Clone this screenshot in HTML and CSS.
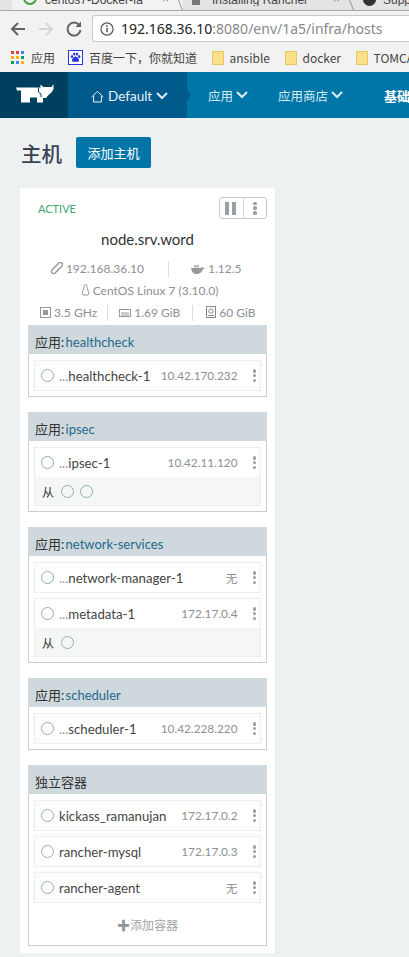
FILE: index.html
```html
<!DOCTYPE html>
<html lang="en">
<head>
    <meta charset="UTF-8">
    <title>Rancher - Hosts</title>
    <link rel="stylesheet" href="styles.css">
</head>
<body>

<div class="tabstrip">
    <div class="tab tab-first">
        <span class="tab-dot"></span>
        <span class="tab-title">centos7-Docker-fa</span>
        <span class="tab-close">×</span>
    </div>
    <div class="tab">
        <span class="tab-page"></span>
        <span class="tab-title">Installing Rancher</span>
        <span class="tab-close">×</span>
    </div>
    <div class="tab tab-last">
        <span class="tab-github"></span>
        <span class="tab-title">Support</span>
    </div>
</div>

<div class="toolbar">
    <svg class="tool" width="18" height="18" viewBox="0 0 18 18"><path d="M16 9H3M9 3L3 9l6 6" fill="none" stroke="#5f6368" stroke-width="2"/></svg>
    <svg class="tool" width="18" height="18" viewBox="0 0 18 18"><path d="M2 9h13M9 3l6 6-6 6" fill="none" stroke="#d5d5d5" stroke-width="2"/></svg>
    <svg class="tool" width="18" height="18" viewBox="0 0 18 18"><path d="M14.5 5.500A6.500 6.500 0 1 0 15.500 10" fill="none" stroke="#5f6368" stroke-width="2"/><path d="M16 1.500V7h-5.500z" fill="#5f6368"/></svg>
    <div class="omnibox">
        <svg width="14" height="14" viewBox="0 0 15 15"><circle cx="7.500" cy="7.500" r="6.500" fill="none" stroke="#555" stroke-width="1.300"/><path d="M7.500 6.500v4.500M7.500 3.500v1.800" stroke="#555" stroke-width="1.600"/></svg>
        <span class="url"><b>192.168.36.10</b>:8080/env/1a5/infra/hosts</span>
    </div>
</div>

<div class="bookmarks">
    <div class="bookmark">
        <svg width="14" height="14" viewBox="0 0 14 14">
            <g fill="#db4437"><rect x="0" y="0" width="3" height="3"/><rect x="5" y="0" width="3" height="3"/></g>
            <rect x="10" y="0" width="3" height="3" fill="#4285f4"/>
            <g fill="#f4b400"><rect x="0" y="5" width="3" height="3"/><rect x="5" y="5" width="3" height="3"/></g>
            <rect x="10" y="5" width="3" height="3" fill="#0f9d58"/>
            <g fill="#0f9d58"><rect x="0" y="10" width="3" height="3"/></g>
            <rect x="5" y="10" width="3" height="3" fill="#4285f4"/>
            <rect x="10" y="10" width="3" height="3" fill="#f4b400"/>
        </svg>
        <span>应用</span>
    </div>
    <div class="bookmark">
        <svg width="15" height="15" viewBox="0 0 15 15">
            <rect x="0.500" y="0.500" width="14" height="14" fill="#fff" stroke="#2932e1"/>
            <g fill="#2932e1"><ellipse cx="4" cy="6.500" rx="1.200" ry="1.600"/><ellipse cx="6.200" cy="4" rx="1.200" ry="1.600"/><ellipse cx="9" cy="4" rx="1.200" ry="1.600"/><ellipse cx="11.200" cy="6.500" rx="1.200" ry="1.600"/><path d="M7.500 6.500c-2 0-3.500 2.500-3.500 4 0 1.500 1.500 1.500 3.500 1.200 2 .3 3.500.3 3.500-1.200 0-1.500-1.500-4-3.500-4z"/></g>
        </svg>
        <span>百度一下，你就知道</span>
    </div>
    <div class="bookmark bookmark-dir"><span class="folder"></span><span>ansible</span></div>
    <div class="bookmark bookmark-dir"><span class="folder"></span><span>docker</span></div>
    <div class="bookmark bookmark-dir"><span class="folder"></span><span>TOMCAT</span></div>
</div>

<nav class="topnav">
    <div class="nav-logo">
        <svg width="38" height="19" viewBox="0 0 38 19"><path d="M0 3.500L1 6.500H5V18.500H14V13.500H21V18.500H27V14H30L33 10.500 35.500 8.500 37.500 5 37.500 0 35.500 3H27.500L24.500 .5V3.500z" fill="#fff"/><path d="M22.500 3.500V8L25 10V13" fill="none" stroke="#00405f"/></svg>
    </div>
    <div class="nav-env">
        <svg width="13" height="13" viewBox="0 0 14 13"><path d="M.8 7L7 1l6.200 6M2.800 6v6.400h8.400V6" fill="none" stroke="#fff" stroke-width="1"/></svg>
        <span>Default</span>
        <svg class="chev" width="12" height="8" viewBox="0 0 12 8"><path d="M1 1l5 5 5-5" fill="none" stroke="#d9edf5" stroke-width="2"/></svg>
    </div>
    <div class="nav-item">应用<svg class="chev" width="12" height="8" viewBox="0 0 12 8"><path d="M1 1l5 5 5-5" fill="none" stroke="#d9edf5" stroke-width="2"/></svg></div>
    <div class="nav-item">应用商店<svg class="chev" width="12" height="8" viewBox="0 0 12 8"><path d="M1 1l5 5 5-5" fill="none" stroke="#d9edf5" stroke-width="2"/></svg></div>
    <div class="nav-item nav-active">基础架构</div>
</nav>

<main class="page">
    <div class="page-head">
        <h1>主机</h1>
        <button class="add-btn">添加主机</button>
    </div>

    <div class="host-card">
        <div class="host-top">
            <span class="state">ACTIVE</span>
            <div class="host-actions">
                <span class="act"><i class="pause"></i><i class="pause"></i></span>
                <span class="act"><span class="dots"><i></i><i></i><i></i></span></span>
            </div>
        </div>
        <div class="host-name">node.srv.word</div>
        <div class="info-row info-two">
            <span>
                <svg width="12" height="12" viewBox="0 0 11 11"><rect x="3.500" y="-1" width="4" height="13" rx="2" transform="rotate(45 5.500 5.500)" fill="none" stroke="#999" stroke-width="1.400"/></svg>
                192.168.36.10
            </span>
            <span>
                <svg width="14" height="9" viewBox="0 0 14 9"><path d="M0 3h10l1-1 3 1.500-2 .7C11 7 9 9 5 9 2 9 .5 6 0 3z" fill="#999"/><path d="M3 0h5v2.500H3z" fill="#bbb"/></svg>
                1.12.5
            </span>
        </div>
        <div class="info-row info-os">
            <span>
                <svg width="9" height="12" viewBox="0 0 9 12"><path d="M4.500.5C3 .5 3 2 3 4L1 9l1 2h5l1-2-2-5c0-2 0-3.500-1.500-3.500z" fill="none" stroke="#999"/></svg>
                CentOS Linux 7 (3.10.0)
            </span>
        </div>
        <div class="info-row info-three">
            <span>
                <svg width="11" height="11" viewBox="0 0 11 11"><rect x=".5" y=".5" width="10" height="10" fill="none" stroke="#999"/><rect x="3" y="3" width="5" height="5" fill="#999"/></svg>
                3.5 GHz
            </span>
            <span>
                <svg width="12" height="10" viewBox="0 0 12 10"><rect x=".5" y="1.500" width="11" height="7" fill="none" stroke="#999"/><path d="M3 4v4M5 4v4M7 4v4M9 4v4" stroke="#999"/></svg>
                1.69 GiB
            </span>
            <span>
                <svg width="10" height="12" viewBox="0 0 10 12"><rect x=".5" y=".5" width="9" height="11" fill="none" stroke="#888"/><circle cx="5" cy="5" r="2.200" fill="none" stroke="#888"/><path d="M2 9.500h6" stroke="#888"/></svg>
                60 GiB
            </span>
        </div>

        <section class="stack">
            <div class="stack-head">应用: <a>healthcheck</a></div>
            <div class="stack-body">
                <div class="ctr">
                    <div class="ctr-main">
                        <span class="ring"></span>
                        <span class="ctr-name"><em>...</em>healthcheck-1</span>
                        <span class="ctr-ip">10.42.170.232</span>
                        <span class="dots"><i></i><i></i><i></i></span>
                    </div>
                </div>
            </div>
        </section>

        <section class="stack">
            <div class="stack-head">应用: <a>ipsec</a></div>
            <div class="stack-body">
                <div class="ctr">
                    <div class="ctr-main">
                        <span class="ring"></span>
                        <span class="ctr-name"><em>...</em>ipsec-1</span>
                        <span class="ctr-ip">10.42.11.120</span>
                        <span class="dots"><i></i><i></i><i></i></span>
                    </div>
                    <div class="ctr-side">从 <span class="ring"></span><span class="ring"></span></div>
                </div>
            </div>
        </section>

        <section class="stack">
            <div class="stack-head">应用: <a>network-services</a></div>
            <div class="stack-body">
                <div class="ctr">
                    <div class="ctr-main">
                        <span class="ring"></span>
                        <span class="ctr-name"><em>...</em>network-manager-1</span>
                        <span class="ctr-ip">无</span>
                        <span class="dots"><i></i><i></i><i></i></span>
                    </div>
                </div>
                <div class="ctr">
                    <div class="ctr-main">
                        <span class="ring"></span>
                        <span class="ctr-name"><em>...</em>metadata-1</span>
                        <span class="ctr-ip">172.17.0.4</span>
                        <span class="dots"><i></i><i></i><i></i></span>
                    </div>
                    <div class="ctr-side">从 <span class="ring"></span></div>
                </div>
            </div>
        </section>

        <section class="stack">
            <div class="stack-head">应用: <a>scheduler</a></div>
            <div class="stack-body">
                <div class="ctr">
                    <div class="ctr-main">
                        <span class="ring"></span>
                        <span class="ctr-name"><em>...</em>scheduler-1</span>
                        <span class="ctr-ip">10.42.228.220</span>
                        <span class="dots"><i></i><i></i><i></i></span>
                    </div>
                </div>
            </div>
        </section>

        <section class="stack">
            <div class="stack-head">独立容器</div>
            <div class="stack-body">
                <div class="ctr">
                    <div class="ctr-main">
                        <span class="ring"></span>
                        <span class="ctr-name">kickass_ramanujan</span>
                        <span class="ctr-ip">172.17.0.2</span>
                        <span class="dots"><i></i><i></i><i></i></span>
                    </div>
                </div>
                <div class="ctr">
                    <div class="ctr-main">
                        <span class="ring"></span>
                        <span class="ctr-name">rancher-mysql</span>
                        <span class="ctr-ip">172.17.0.3</span>
                        <span class="dots"><i></i><i></i><i></i></span>
                    </div>
                </div>
                <div class="ctr">
                    <div class="ctr-main">
                        <span class="ring"></span>
                        <span class="ctr-name">rancher-agent</span>
                        <span class="ctr-ip">无</span>
                        <span class="dots"><i></i><i></i><i></i></span>
                    </div>
                </div>
                <div class="add-ctr"><span class="plus">✚</span>添加容器</div>
            </div>
        </section>
    </div>
</main>

</body>
</html>
```

FILE: styles.css
```css
* {
    box-sizing: border-box;
}

html, body {
    margin: 0;
    padding: 0;
    height: 957px;
    overflow: hidden;
}

body {
    width: 409px;
    font-family: Lato, "Noto Sans CJK SC", sans-serif;
    background-color: #eef1f2;
    color: #444;
}

/* browser chrome */
.tabstrip {
    display: flex;
    height: 11px;
    overflow: hidden;
    background-color: #e4e4e4;
    border-bottom: 1px solid #a8a8a8;
    padding-left: 12px;
}

.tab {
    position: relative;
    width: 171px;
    height: 10px;
    flex-shrink: 0;
    display: flex;
    align-items: flex-start;
    gap: 12px;
    padding: 0 14px 0 9px;
    font: 12px/12px "Liberation Sans", sans-serif;
    color: #444;
}

.tab::after {
    content: "";
    position: absolute;
    right: 2px;
    top: -2px;
    height: 14px;
    border-right: 1px solid #999;
    transform: rotate(-22deg);
}

.tab-first {
    background-color: #f2f2f2;
    padding-left: 11px;
    gap: 8px;
}

.tab-last {
    gap: 7px;
}

.tab-title {
    white-space: nowrap;
    overflow: hidden;
    margin-top: -6px;
}

.tab-close {
    margin-left: auto;
    margin-top: -7px;
    color: #888;
}

.tab-dot {
    width: 14px;
    height: 14px;
    margin-top: -9px;
    border: 2px solid #43a047;
    border-radius: 50%;
    flex-shrink: 0;
}

.tab-page {
    width: 8px;
    height: 10px;
    margin-top: -5px;
    background-color: #777;
    flex-shrink: 0;
}

.tab-github {
    width: 13px;
    height: 13px;
    margin-top: -7px;
    border-radius: 50%;
    background-color: #333;
    flex-shrink: 0;
}

.toolbar {
    height: 38px;
    display: flex;
    align-items: center;
    background-color: #f2f2f2;
    padding: 0 0 3px 9px;
    gap: 10px;
}

.omnibox {
    flex: 1;
    height: 27px;
    margin-left: -1px;
    background-color: #fff;
    border: 1px solid #c8c8c8;
    border-right: 0;
    border-radius: 3px 0 0 3px;
    display: flex;
    align-items: center;
    gap: 7px;
    padding-left: 7px;
}

.url {
    font: 14px "Noto Sans", sans-serif;
    color: #888;
    white-space: nowrap;
}

.url b {
    font-weight: normal;
    color: #222;
}

.bookmarks {
    height: 23px;
    overflow: hidden;
    background-color: #f2f2f2;
    display: flex;
    align-items: center;
    padding: 0 0 6px 11px;
    gap: 13px;
    font: 12px "Noto Sans CJK SC", sans-serif;
    color: #444;
    white-space: nowrap;
}

.bookmark {
    display: flex;
    align-items: center;
    gap: 6px;
}

.bookmark svg {
    flex-shrink: 0;
}

.bookmark-dir {
    margin-left: 1.5px;
}

.folder {
    width: 12px;
    height: 14px;
    background-color: #fbe08a;
    border: 1px solid #e8c860;
}

/* rancher nav */
.topnav {
    height: 46px;
    overflow: hidden;
    display: flex;
    align-items: center;
    background-color: #0075a8;
    color: #d9edf5;
    font-size: 12.5px;
    white-space: nowrap;
}

.nav-logo {
    width: 68px;
    height: 100%;
    flex-shrink: 0;
    background-color: #00405f;
    display: flex;
    align-items: center;
    padding: 0 0 3px 16px;
}

.nav-env {
    position: relative;
    width: 119px;
    height: 100%;
    flex-shrink: 0;
    background-color: #005a8c;
    color: #e8f4f9;
    font-size: 13.5px;
    display: flex;
    align-items: center;
    gap: 4px;
    padding: 2px 0 0 23px;
}

.nav-env::after {
    content: "";
    position: absolute;
    left: 100%;
    top: 17px;
    border: 6px solid transparent;
    border-left: 4px solid #005a8c;
    border-right: 0;
}

.nav-item {
    display: flex;
    align-items: center;
    gap: 3px;
    flex-shrink: 0;
    margin-left: 21px;
    margin-right: 9px;
}

.nav-active {
    color: #fff;
    font-weight: bold;
    font-size: 13px;
    margin-left: 32px;
}

/* page */
.page {
    padding: 19px 0 0 20px;
}

.page-head {
    display: flex;
    align-items: center;
    gap: 14px;
    height: 31px;
    padding-left: 1px;
}

.page-head h1 {
    margin: 0;
    font: 500 20.5px "Noto Sans CJK SC", sans-serif;
    color: #3a4256;
}

.add-btn {
    width: 75px;
    height: 31px;
    background-color: #0075a8;
    color: #fff;
    border: none;
    border-radius: 2px;
    font: 13px "Noto Sans CJK SC", sans-serif;
    padding: 0;
}

.host-card {
    width: 255px;
    height: 765px;
    margin-top: 20px;
    background-color: #fff;
    padding: 0 8px;
}

.host-top {
    height: 42px;
    display: flex;
    align-items: flex-start;
    justify-content: space-between;
    padding: 9px 0 0 10px;
}

.state {
    font-size: 11px;
    color: #41a36f;
    line-height: 24px;
}

.host-actions {
    display: flex;
    width: 48px;
    height: 22px;
    border: 1px solid #c5c9cc;
    border-radius: 3px;
}

.act {
    flex: 1;
    display: flex;
    align-items: center;
    justify-content: center;
    gap: 2px;
}

.act + .act {
    border-left: 1px solid #d5d8da;
}

.pause {
    width: 4px;
    height: 13px;
    background-color: #9aa1a4;
    margin-right: 1px;
}

.host-name {
    text-align: center;
    font-size: 15px;
    color: #333;
    line-height: 18px;
}

.info-row {
    display: flex;
    justify-content: center;
    font-size: 12px;
    color: #8d9094;
    line-height: 16px;
    margin-top: 6px;
    white-space: nowrap;
}

.info-row svg {
    vertical-align: -1px;
}

.info-two {
    justify-content: flex-start;
    margin-top: 13px;
}

.info-two span:first-child {
    width: 141px;
    text-align: right;
    padding-right: 24px;
    border-right: 1px solid #ddd;
}

.info-two span:last-child {
    padding-left: 22px;
}

.info-os {
    padding-left: 4px;
}

.info-three {
    justify-content: flex-start;
    margin-top: 6px;
    padding-left: 12px;
}

.info-three span + span {
    margin-left: 10px;
    padding-left: 11px;
    border-left: 1px solid #ddd;
}

.info-three span:last-child {
    margin-left: 12px;
    padding-left: 13px;
}

/* stacks */
.stack {
    border: 1px solid #c8cdd0;
    border-top: 0;
    margin-bottom: 15px;
}

.info-three + .stack {
    margin-top: 4px;
}

.stack-head {
    height: 29px;
    margin: 0 -1px;
    background-color: #cfd8dd;
    padding-left: 7px;
    font-size: 13px;
    line-height: 34px;
    color: #333;
}

.stack-head a {
    margin-left: -2px;
    color: #1e6a8e;
}

.stack-body {
    padding: 6px 5px 5px;
}

.ctr {
    border: 1px dotted #dcdfe1;
    margin-bottom: 5px;
}

.ctr:last-child {
    margin-bottom: 0;
}

.ctr-main {
    height: 29px;
    display: flex;
    align-items: center;
    padding: 0 4px 0 6px;
    font-size: 13.2px;
    white-space: nowrap;
}

.ctr-name {
    margin-left: 5px;
    color: #444;
}

.ctr-name em {
    font-style: normal;
    color: #999;
}

.ctr-ip {
    margin-left: auto;
    margin-right: 15px;
    font-size: 11.8px;
    color: #8d9094;
}

.ring {
    width: 13px;
    height: 13px;
    flex-shrink: 0;
    display: inline-block;
    border: 1px solid #8fb59a;
    border-radius: 50%;
}

.dots {
    display: inline-flex;
    flex-direction: column;
    gap: 1.25px;
}

.dots i {
    width: 3.5px;
    height: 3.5px;
    border-radius: 50%;
    background-color: #9aa1a4;
}

.ctr-side {
    height: 28px;
    background-color: #f5f6f6;
    display: flex;
    align-items: center;
    gap: 6.5px;
    padding-left: 7px;
    font-size: 12px;
    color: #333;
}

.add-ctr {
    height: 32px;
    display: flex;
    align-items: center;
    justify-content: center;
    font-size: 12px;
    color: #a0a4a7;
}

.plus {
    font-size: 13px;
    color: #8f9598;
}
```
